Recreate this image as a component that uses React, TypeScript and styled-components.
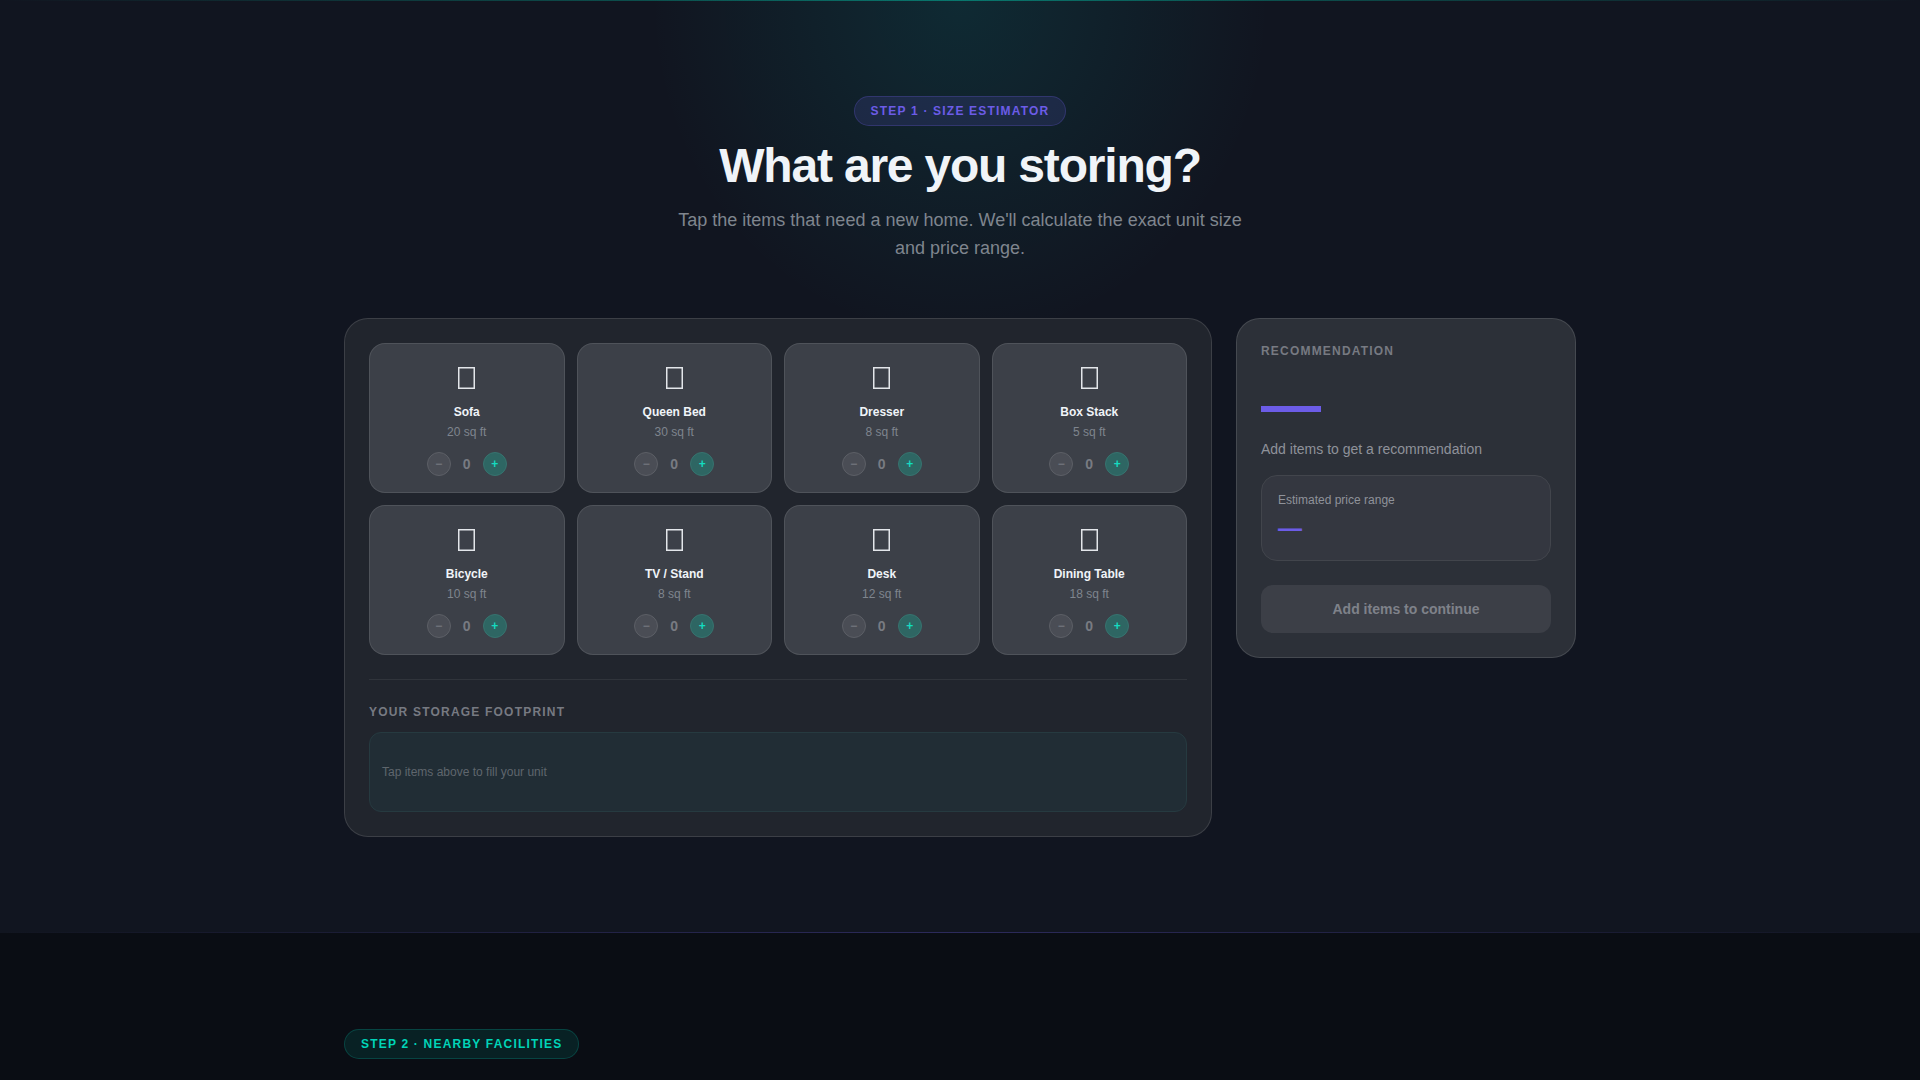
import React from "react";
import styled, { createGlobalStyle } from "styled-components";

const Global = createGlobalStyle`
  html, body { margin: 0; padding: 0; background: #0a0d14; overflow: hidden; }
  * { box-sizing: border-box; }
  body { font-family: "Liberation Sans", Arial, sans-serif; }
`;

const Hero = styled.section`
  position: relative;
  padding: 96px 0;
  background:
    radial-gradient(ellipse 310px 340px at 50% 0, rgba(0, 195, 190, 0.12), rgba(0, 195, 190, 0) 100%),
    #111520;
  &::before, &::after {
    content: "";
    position: absolute;
    left: 0;
    right: 0;
    height: 1px;
  }
  &::before { top: 0; background: linear-gradient(90deg, transparent, rgba(0, 212, 180, 0.45), transparent); }
  &::after { bottom: 0; background: linear-gradient(90deg, transparent, rgba(108, 92, 231, 0.3), transparent); }
`;

const Container = styled.div`
  width: 1232px;
  margin: 0 auto;
`;

const Head = styled.header`
  display: flex;
  flex-direction: column;
  align-items: center;
  text-align: center;
  margin-bottom: 56px;
`;

const Pill = styled.span<{ $teal?: boolean }>`
  display: inline-flex;
  align-items: center;
  height: 30px;
  padding: 0 16px;
  border-radius: 100px;
  font-size: 12px;
  font-weight: 700;
  letter-spacing: 1.2px;
  color: ${(p) => (p.$teal ? "#00d4b8" : "#6c5ce7")};
  background: ${(p) => (p.$teal ? "rgba(0, 212, 184, 0.1)" : "rgba(108, 92, 231, 0.15)")};
  border: 1px solid ${(p) => (p.$teal ? "rgba(0, 212, 184, 0.2)" : "rgba(108, 92, 231, 0.25)")};
`;

const Title = styled.h1`
  margin: 14px 0 13px;
  font-size: 48px;
  line-height: 1.1;
  font-weight: 800;
  letter-spacing: -1.2px;
  color: #f0f4f8;
`;

const Sub = styled.p`
  margin: 0;
  max-width: 580px;
  font-size: 18px;
  line-height: 28px;
  color: #7f858e;
`;

const Columns = styled.div`
  display: grid;
  grid-template-columns: 1fr 340px;
  gap: 24px;
  align-items: start;
`;

const Panel = styled.div<{ $light?: boolean }>`
  padding: 24px;
  border-radius: 24px;
  background: ${(p) => (p.$light ? "#2c3038" : "#21252d")};
  border: 1px solid rgba(255, 255, 255, 0.12);
`;

const Grid = styled.div`
  display: grid;
  grid-template-columns: repeat(4, 1fr);
  gap: 12px;
`;

const Card = styled.div`
  height: 150px;
  padding-top: 17px;
  border-radius: 16px;
  background: #3c4048;
  border: 1px solid rgba(255, 255, 255, 0.1);
  display: flex;
  flex-direction: column;
  align-items: center;
`;

const Emoji = styled.div`
  height: 34px;
  display: flex;
  align-items: center;
  justify-content: center;
`;

const Name = styled.div`
  margin-top: 8px;
  font-size: 12px;
  line-height: 18px;
  font-weight: 700;
  color: #f0f4f8;
`;

const Size = styled.div`
  margin-top: 2px;
  font-size: 12px;
  line-height: 18px;
  color: #7f858e;
`;

const Stepper = styled.div`
  margin-top: 11px;
  display: flex;
  align-items: center;
  gap: 8px;
`;

const Round = styled.button<{ $plus?: boolean }>`
  width: 24px;
  height: 24px;
  padding: 0;
  border-radius: 50%;
  font-family: inherit;
  font-size: 12px;
  font-weight: 700;
  line-height: 1;
  display: flex;
  align-items: center;
  justify-content: center;
  color: ${(p) => (p.$plus ? "#14dcc0" : "#6f727a")};
  background: ${(p) => (p.$plus ? "#2e6663" : "#4a4d55")};
  border: 1px solid ${(p) => (p.$plus ? "#37736f" : "#5c5f66")};
`;

const Count = styled.span`
  width: 16px;
  text-align: center;
  font-size: 14px;
  font-weight: 700;
  color: #787b82;
`;

const Divider = styled.div`
  height: 1px;
  margin: 24px 0;
  background: rgba(255, 255, 255, 0.07);
`;

const Label = styled.div`
  font-size: 12px;
  line-height: 16px;
  font-weight: 700;
  letter-spacing: 1.2px;
  text-transform: uppercase;
  color: #777a82;
`;

const Footprint = styled.div`
  margin-top: 12px;
  height: 80px;
  padding: 0 12px;
  display: flex;
  align-items: center;
  border-radius: 12px;
  background: #212d35;
  border: 1px solid #263a40;
  font-size: 12px;
  color: #5f666d;
`;

const UnitDash = styled.div`
  margin-top: 16px;
  font-size: 60px;
  line-height: 60px;
  font-weight: 700;
  color: #6c5ce7;
`;

const Hint = styled.div`
  margin-top: 3px;
  font-size: 14px;
  line-height: 22px;
  color: #8f929a;
`;

const PriceBox = styled.div`
  margin-top: 15px;
  height: 86px;
  padding: 15px 16px 16px;
  border-radius: 16px;
  background: #343740;
  border: 1px solid #42454c;
`;

const PriceLabel = styled.div`
  font-size: 12px;
  line-height: 18px;
  color: #8f929a;
`;

const PriceDash = styled.div`
  margin-top: 4px;
  font-size: 24px;
  line-height: 30px;
  font-weight: 700;
  color: #6c5ce7;
`;

const Cta = styled.button`
  display: block;
  width: 100%;
  height: 48px;
  margin-top: 24px;
  border: 0;
  border-radius: 12px;
  background: #3c3f47;
  color: #7f828a;
  font-family: inherit;
  font-size: 14px;
  font-weight: 700;
`;

const Nearby = styled.section`
  padding: 96px 0;
  background: #0a0d14;
`;

const MissingGlyph = () => (
  <svg width="17" height="22" viewBox="0 0 17 22" aria-hidden="true">
    <rect x="0.75" y="0.75" width="15.5" height="20.5" fill="none" stroke="#e3e6ea" strokeWidth="1.5" />
  </svg>
);

const items = [
  ["Sofa", 20], ["Queen Bed", 30], ["Dresser", 8], ["Box Stack", 5],
  ["Bicycle", 10], ["TV / Stand", 8], ["Desk", 12], ["Dining Table", 18],
] as const;

export default function App() {
  return (
    <>
      <Global />
      <Hero>
        <Container>
          <Head>
            <Pill>STEP 1 · SIZE ESTIMATOR</Pill>
            <Title>What are you storing?</Title>
            <Sub>Tap the items that need a new home. We'll calculate the exact unit size and price range.</Sub>
          </Head>
          <Columns>
            <Panel>
              <Grid>
                {items.map(([name, size]) => (
                  <Card key={name}>
                    <Emoji><MissingGlyph /></Emoji>
                    <Name>{name}</Name>
                    <Size>{size} sq ft</Size>
                    <Stepper>
                      <Round>−</Round>
                      <Count>0</Count>
                      <Round $plus>+</Round>
                    </Stepper>
                  </Card>
                ))}
              </Grid>
              <Divider />
              <Label>Your storage footprint</Label>
              <Footprint>Tap items above to fill your unit</Footprint>
            </Panel>
            <Panel $light>
              <Label>Recommendation</Label>
              <UnitDash>—</UnitDash>
              <Hint>Add items to get a recommendation</Hint>
              <PriceBox>
                <PriceLabel>Estimated price range</PriceLabel>
                <PriceDash>—</PriceDash>
              </PriceBox>
              <Cta>Add items to continue</Cta>
            </Panel>
          </Columns>
        </Container>
      </Hero>
      <Nearby>
        <Container>
          <Pill $teal>STEP 2 · NEARBY FACILITIES</Pill>
        </Container>
      </Nearby>
    </>
  );
}
